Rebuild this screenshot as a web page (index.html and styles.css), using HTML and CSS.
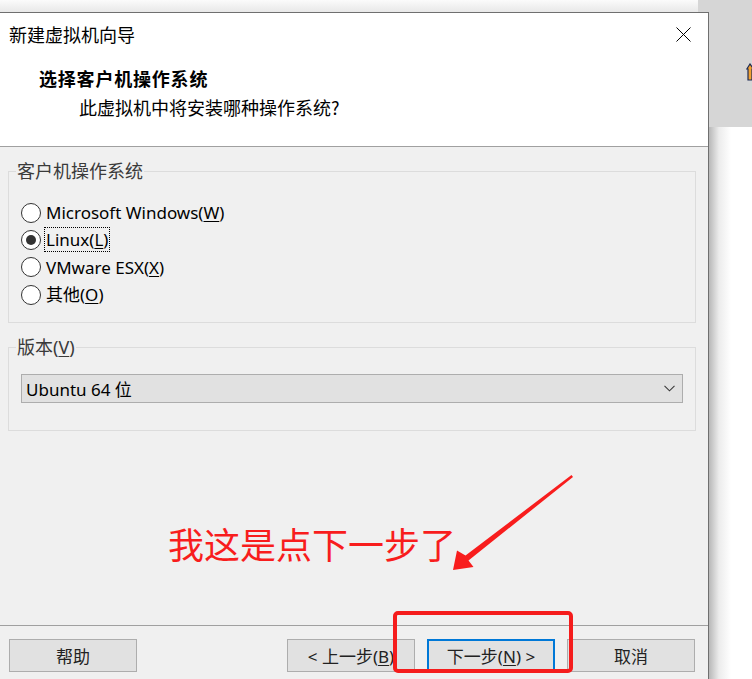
FILE: index.html
```html
<!DOCTYPE html>
<html lang="zh-CN">
<head>
<meta charset="utf-8">
<title>新建虚拟机向导</title>
<link rel="stylesheet" href="styles.css">
</head>
<body>
<div class="screen">
  <div class="topstrip"></div>
  <div class="dialog">
    <header class="dlg-head">
      <div class="titlebar">
        <span class="title">新建虚拟机向导</span>
        <svg class="close" width="15" height="15" viewBox="0 0 15 15"><path d="M0.5 0.5 L14.5 14.5 M14.5 0.5 L0.5 14.5" stroke="#000" stroke-width="1" fill="none"/></svg>
      </div>
      <h1 class="heading">选择客户机操作系统</h1>
      <p class="subtitle">此虚拟机中将安装哪种操作系统?</p>
    </header>
    <main class="dlg-body">
      <fieldset class="group">
        <legend>客户机操作系统</legend>
        <div class="radios">
          <div class="radio"><span class="dot"></span><span class="lbl">Microsoft Windows(<u>W</u>)</span></div>
          <div class="radio"><span class="dot checked"></span><span class="lbl focus">Linux(<u>L</u>)</span></div>
          <div class="radio"><span class="dot"></span><span class="lbl">VMware ESX(<u>X</u>)</span></div>
          <div class="radio"><span class="dot"></span><span class="lbl">其他(<u>O</u>)</span></div>
        </div>
      </fieldset>
      <fieldset class="group ver">
        <legend>版本(<u>V</u>)</legend>
        <div class="select">
          <span class="sel-text">Ubuntu 64 位</span>
          <svg class="chev" width="11" height="7" viewBox="0 0 11 7"><path d="M0.5 0.8 L5.5 5.8 L10.5 0.8" stroke="#3a3a3a" stroke-width="1.1" fill="none"/></svg>
        </div>
      </fieldset>
    </main>
    <footer class="dlg-foot">
      <button class="btn">帮助</button>
      <div class="nav">
        <button class="btn">&lt; 上一步(<u>B</u>)</button>
        <button class="btn default">下一步(<u>N</u>) &gt;</button>
        <button class="btn">取消</button>
      </div>
    </footer>
  </div>
  <aside class="side">
    <div class="side-top">
      <svg class="side-icon" width="8" height="18" viewBox="0 0 8 18"><path d="M2 17 L2 6 L0.8 6 L4 1 L7.5 6 L6 6 L6 17 Z" fill="#f0a030" stroke="#1d2a55" stroke-width="1.2"/></svg>
    </div>
    <div class="side-rest"></div>
  </aside>

  <div class="note">我这是点下一步了</div>
  <svg class="arrow" width="752" height="679" viewBox="0 0 752 679">
    <polygon points="571.5,475 465.5,555.5 457,550.5 453,570 473.5,567 468.5,560.5 573,477" fill="#f81d1d"/>
  </svg>
  <div class="redbox"></div>
</div>
</body>
</html>
```

FILE: styles.css
```css
body {
  margin: 0;
  width: 752px;
  height: 679px;
  overflow: hidden;
  background: #fff;
  font-family: "Noto Sans", "Noto Sans CJK SC", sans-serif;
  color: #000;
}

.screen {
  position: relative;
  display: grid;
  grid-template-columns: 709px 43px;
  grid-template-rows: 12px 667px;
}

.topstrip {
  grid-column: 1 / 3;
  grid-row: 1;
  background:
    linear-gradient(to right, transparent 698px, #d6d6d6 698px),
    linear-gradient(#fbfbfb, #e8e8e8);
}

.dialog {
  grid-column: 1;
  grid-row: 2;
  display: flex;
  flex-direction: column;
  background: #f0f0f0;
  border-top: 1px solid #6f6f6f;
  border-right: 1px solid #6f6f6f;
  min-height: 0;
}

/* header */
.dlg-head {
  height: 134px;
  box-sizing: border-box;
  background: #fff;
  border-bottom: 1px solid #a0a0a0;
  padding-top: 9px;
  font-family: "Noto Sans CJK SC", sans-serif;
}

.titlebar {
  display: flex;
  align-items: center;
  justify-content: space-between;
  height: 24px;
  padding: 0 17px 0 9px;
  font-size: 18px;
  line-height: 24px;
}

.close {
  display: block;
}

.heading {
  margin: 20px 0 0 39px;
  font-size: 18px;
  line-height: 24px;
  font-weight: bold;
  letter-spacing: 0.8px;
}

.subtitle {
  margin: 5px 0 0 79px;
  font-size: 18px;
  line-height: 24px;
}

/* body */
.dlg-body {
  flex: 1;
  padding: 12px 12px 0 8px;
}

.group {
  margin: 0;
  padding: 0;
  border: 1px solid #dcdcdc;
  min-width: 0;
}

.group legend {
  margin-left: 7px;
  padding: 0 1px;
  font-size: 18px;
  line-height: 24px;
  color: #3a3a3a;
}

.group.ver {
  margin-top: 12px;
}

.radios {
  padding: 16px 0 14px 12px;
}

.radio {
  display: flex;
  align-items: center;
  height: 27.3px;
  font-size: 17px;
}

.dot {
  width: 20px;
  height: 20px;
  box-sizing: border-box;
  border: 1px solid #333;
  border-radius: 50%;
  background: #fff;
  margin-right: 4px;
  display: grid;
  place-items: center;
}

.dot.checked::after {
  content: "";
  width: 10px;
  height: 10px;
  border-radius: 50%;
  background: #333;
}

.lbl {
  display: inline-block;
  padding: 0 1px;
  line-height: 23px;
}

.lbl.focus {
  outline: 1px dotted #000;
}

u {
  text-underline-offset: 2px;
}

.select {
  margin: 15px 12px 27px 12px;
  height: 29px;
  box-sizing: border-box;
  border: 1px solid #adadad;
  background: #e1e1e1;
  display: flex;
  align-items: center;
  justify-content: space-between;
  padding: 0 7px 0 4px;
  font-size: 17px;
}

.chev {
  display: block;
}

/* footer */
.dlg-foot {
  height: 54px;
  box-sizing: border-box;
  border-top: 1px solid #a0a0a0;
  display: flex;
  justify-content: space-between;
  align-items: flex-start;
  padding: 13px 13px 0 9px;
}

.nav {
  display: flex;
  gap: 12px;
}

.btn {
  width: 128px;
  height: 33px;
  box-sizing: border-box;
  border: 1px solid #adadad;
  background: #e1e1e1;
  padding: 0;
  font-family: "Noto Sans", "Noto Sans CJK SC", sans-serif;
  font-size: 17px;
  color: #222;
}

.btn.default {
  border: 2px solid #0078d7;
}

/* right-hand background window */
.side {
  grid-column: 2;
  grid-row: 2;
  display: flex;
  flex-direction: column;
}

.side-top {
  height: 115px;
  background: #d6d6d6;
  padding: 51px 0 0 37px;
  box-sizing: border-box;
}

.side-icon {
  display: block;
}

.side-rest {
  flex: 1;
  background: linear-gradient(to right, #b8b8b8, #ececec 10px, #fff 22px);
}

/* annotations */
.note {
  position: absolute;
  left: 168px;
  top: 525px;
  font-family: "Noto Sans CJK SC", sans-serif;
  font-size: 36px;
  line-height: 36px;
  color: #f81d1d;
  white-space: nowrap;
}

.arrow {
  position: absolute;
  left: 0;
  top: 0;
  pointer-events: none;
}

.redbox {
  position: absolute;
  left: 393px;
  top: 611px;
  width: 180px;
  height: 62px;
  box-sizing: border-box;
  border: 4px solid #f51c1c;
  border-radius: 5px;
}
```
